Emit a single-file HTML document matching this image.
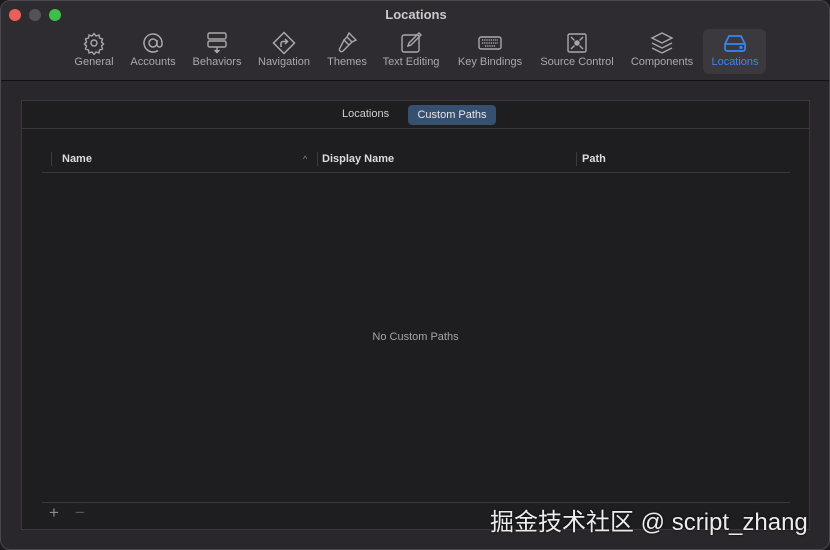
<!DOCTYPE html>
<html><head><meta charset="utf-8"><style>
*{margin:0;padding:0;box-sizing:border-box}
body{width:830px;height:550px;background:#1a191c;font-family:"Liberation Sans","Noto Sans CJK SC",sans-serif;overflow:hidden}
.win{position:absolute;left:0;top:0;width:830px;height:550px;background:#29272b;border-radius:10px;border:1px solid #4a484c;overflow:hidden}
.tb{position:absolute;left:0;top:0;width:830px;height:80px;background:#2e2c30;border-bottom:1px solid #111}
.dot{position:absolute;top:8px;width:12px;height:12px;border-radius:50%}
.title{position:absolute;top:6px;left:0;width:830px;text-align:center;color:#c9c8ca;font-size:13px;font-weight:bold}
.it{position:absolute;top:30px;text-align:center;color:#a9a8ab;font-size:11px}
.it svg{display:block;margin:0 auto 1px;width:24px;height:24px}
.it span{display:block}
.sel{position:absolute;left:702px;top:28px;width:63px;height:45px;background:#3b393d;border-radius:6px}
.box{position:absolute;left:20px;top:99px;width:789px;height:430px;background:#1e1d20;border:1px solid #3a383c}
.v{position:absolute;width:1px;background:#3c3a3e}
</style></head><body>
<div class="win">
<div class="tb">
<div class="dot" style="left:8px;background:#ec5f58"></div>
<div class="dot" style="left:28px;background:#545256"></div>
<div class="dot" style="left:48px;background:#3dc04a"></div>
<div class="title">Locations</div>
<div class="sel"></div>
<div class="it" style="left:70px;width:46px"><svg viewBox="0 0 24 24" fill="none" stroke="#a9a8ab" stroke-width="1.4"><circle cx="12" cy="12" r="3"/><path d="M12 2.5l2 2.5 3-1 .5 3 3 1-1 3 2 2-2 2 1 3-3 1-.5 3-3-1-2 2.5-2-2.5-3 1-.5-3-3-1 1-3-2-2 2-2-1-3 3-1 .5-3 3 1z"/></svg><span>General</span></div>
<div class="it" style="left:125px;width:54px"><svg viewBox="0 0 24 24" fill="none" stroke="#a9a8ab" stroke-width="1.5"><circle cx="12" cy="12" r="4"/><path d="M16 9v4.5a2.5 2.5 0 005 0V12a9 9 0 10-4 7.5"/></svg><span>Accounts</span></div>
<div class="it" style="left:188px;width:56px"><svg viewBox="0 0 24 24" fill="none" stroke="#a9a8ab" stroke-width="1.4"><rect x="3" y="2" width="18" height="6" rx="1.5"/><rect x="3" y="10" width="18" height="6" rx="1.5"/><path d="M12 16v5M9.5 19l2.5 2.5 2.5-2.5" fill="#a9a8ab"/></svg><span>Behaviors</span></div>
<div class="it" style="left:253px;width:60px"><svg viewBox="0 0 24 24" fill="none" stroke="#a9a8ab" stroke-width="1.5"><path d="M12 1.5L22.5 12 12 22.5 1.5 12z"/><path d="M9 16v-3.5a2 2 0 012-2h4M13 8l2.5 2.5L13 13"/></svg><span>Navigation</span></div>
<div class="it" style="left:322px;width:48px"><svg viewBox="0 0 24 24" fill="none" stroke="#a9a8ab" stroke-width="1.4"><path d="M14 2l7 7-4 2-5-5zM12 6l5 5-3 3-5-5zM9 9l5 5-6 6a2 2 0 01-3-3z"/></svg><span>Themes</span></div>
<div class="it" style="left:378px;width:64px"><svg viewBox="0 0 24 24" fill="none" stroke="#a9a8ab" stroke-width="1.4"><rect x="3" y="4" width="17" height="17" rx="2"/><path d="M9 15l1-3 10-10 2 2-10 10z"/></svg><span>Text Editing</span></div>
<div class="it" style="left:453px;width:72px"><svg viewBox="0 0 24 24" fill="none" stroke="#a9a8ab" stroke-width="1.4"><rect x="1" y="6" width="22" height="12" rx="2"/><path d="M4 9h16M4 12h16M7 15h10" stroke-dasharray="1.2 1"/></svg><span>Key Bindings</span></div>
<div class="it" style="left:534px;width:84px"><svg viewBox="0 0 24 24" fill="none" stroke="#a9a8ab" stroke-width="1.4"><rect x="3" y="3" width="18" height="18" rx="1.5"/><circle cx="12" cy="12" r="2" fill="#a9a8ab"/><path d="M6 6l3.5 3.5M18 6l-3.5 3.5M6 18l3.5-3.5M18 18l-3.5-3.5"/></svg><span>Source Control</span></div>
<div class="it" style="left:626px;width:70px"><svg viewBox="0 0 24 24" fill="none" stroke="#a9a8ab" stroke-width="1.4"><path d="M12 2l10 5-10 5L2 7z"/><path d="M2 12l10 5 10-5M2 17l10 5 10-5"/></svg><span>Components</span></div>
<div class="it" style="left:704px;width:60px;color:#3a86f0"><svg viewBox="0 0 24 24" fill="none" stroke="#3a86f0" stroke-width="1.7"><path d="M2 13l4-8h12l4 8v5a2 2 0 01-2 2H4a2 2 0 01-2-2z"/><path d="M2 13h20"/><circle cx="18" cy="16.5" r=".8" fill="#3a86f0"/></svg><span>Locations</span></div>
</div>
<div class="box">
<div style="position:absolute;left:0;top:27px;width:787px;height:1px;background:#39373b"></div>
<div style="position:absolute;left:320px;top:7px;color:#cfced0;font-size:11px">Locations</div>
<div style="position:absolute;left:386px;top:4px;width:88px;height:20px;background:#36506f;border-radius:4px;color:#e6e6e8;font-size:11px;text-align:center;line-height:20px">Custom Paths</div>
<div style="position:absolute;left:20px;top:71px;width:748px;height:1px;background:#3a383c"></div>
<div class="v" style="left:29px;top:51px;height:14px"></div>
<div class="v" style="left:295px;top:51px;height:14px"></div>
<div class="v" style="left:554px;top:51px;height:14px"></div>
<div style="position:absolute;left:40px;top:52px;color:#dcdbdd;font-size:11px;font-weight:bold">Name</div>
<div style="position:absolute;left:281px;top:53px;color:#8a898c;font-size:9px">^</div>
<div style="position:absolute;left:300px;top:52px;color:#dcdbdd;font-size:11px;font-weight:bold">Display Name</div>
<div style="position:absolute;left:560px;top:52px;color:#dcdbdd;font-size:11px;font-weight:bold">Path</div>
<div style="position:absolute;left:0;top:230px;width:787px;text-align:center;color:#a6a5a8;font-size:11px">No Custom Paths</div>
<div style="position:absolute;left:20px;top:401px;width:748px;height:1px;background:#3a383c"></div>
<div style="position:absolute;left:27px;top:402px;color:#8a898c;font-size:17px">+</div>
<div style="position:absolute;left:53px;top:402px;color:#58575a;font-size:17px">−</div>
</div>
<div style="position:absolute;left:489px;top:501px;color:#ececec;font-size:24px;text-shadow:0 0 2px #000;white-space:nowrap">掘金技术社区 @ script_zhang</div>
</div>
</body></html>
